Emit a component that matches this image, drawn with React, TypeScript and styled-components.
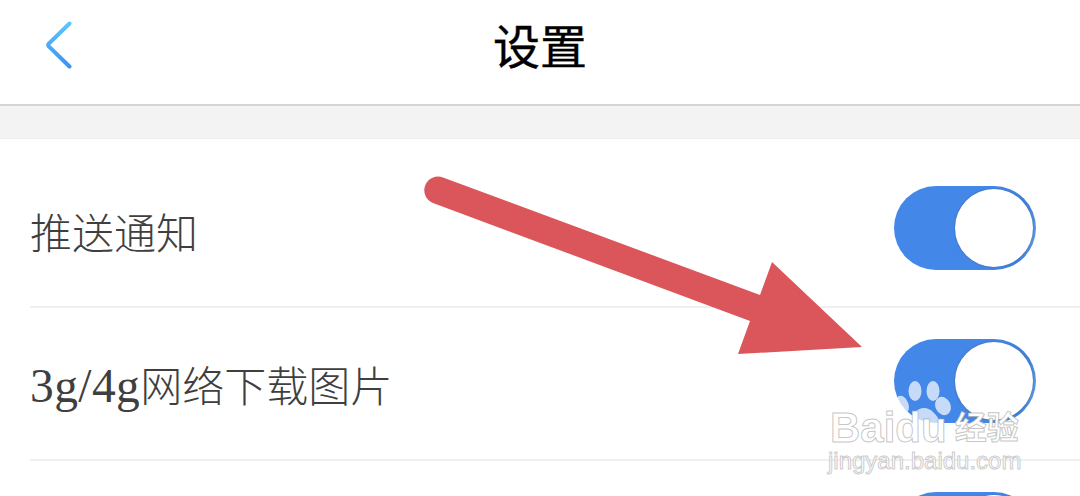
import React from "react";
import styled, { createGlobalStyle } from "styled-components";

const GlobalStyle = createGlobalStyle`
  html, body {
    margin: 0;
    padding: 0;
    background: #ffffff;
  }
`;

const App: React.FC = () => {
  return (
    <Page>
      <GlobalStyle />
      <Header>
        <BackButton>
          <svg width="26" height="48" viewBox="0 0 26 48" fill="none">
            <defs>
              <linearGradient id="back" x1="0" y1="0" x2="0" y2="1">
                <stop offset="0" stopColor="#5cc4ff" />
                <stop offset="1" stopColor="#3a94f4" />
              </linearGradient>
            </defs>
            <path
              d="M23.5 2.5 L2.8 22.6 Q1.6 24 2.8 25.4 L23.5 45.5"
              stroke="url(#back)"
              strokeWidth="4"
              strokeLinecap="round"
              strokeLinejoin="round"
            />
          </svg>
        </BackButton>
        <Title>设置</Title>
      </Header>
      <Band />
      <List>
        <Row>
          <Label>推送通知</Label>
          <Toggle>
            <Knob />
          </Toggle>
        </Row>
        <Row>
          <Label>
            <Latin>3g/4g</Latin>网络下载图片
          </Label>
          <Toggle>
            <Knob />
          </Toggle>
        </Row>
        <Row>
          <Label />
          <Toggle>
            <Knob />
          </Toggle>
        </Row>
      </List>

      <Arrow width="1080" height="496" viewBox="0 0 1080 496">
        <path
          d="M443 177.5 L760 295 L772 262 L862 347 L738 354 L750 321 L433 203 A13.5 13.5 0 0 1 443 177.5 Z"
          fill="#db565b"
        />
      </Arrow>

      <Watermark>
        <Paw width="60" height="48" viewBox="0 0 60 48">
          <g fill="#ffffff" fillOpacity="0.7">
            <ellipse cx="9" cy="25" rx="6.5" ry="9.5" transform="rotate(-20 9 25)" />
            <ellipse cx="22" cy="11" rx="6.5" ry="10" />
            <ellipse cx="40" cy="11" rx="6.5" ry="10" />
            <ellipse cx="50" cy="26" rx="7.5" ry="9.5" transform="rotate(-25 50 26)" />
            <path d="M31 28 C38 28 44 35 47 42 L47 48 L15 48 L15 42 C18 35 24 28 31 28 Z" />
          </g>
        </Paw>
        <BrandLine>
          <BrandName>Baidu</BrandName>
          <BrandCn>经验</BrandCn>
        </BrandLine>
        <BrandUrl>jingyan.baidu.com</BrandUrl>
      </Watermark>
    </Page>
  );
};

const Page = styled.div`
  position: relative;
  width: 1080px;
  height: 496px;
  overflow: hidden;
  background: #ffffff;
  font-family: "Liberation Serif", "Noto Sans CJK SC", serif;
`;

const Header = styled.header`
  display: flex;
  align-items: center;
  justify-content: center;
  position: relative;
  height: 104px;
  border-bottom: 2px solid #d4d4d4;
`;

const BackButton = styled.div`
  position: absolute;
  left: 46px;
  top: 21px;
  line-height: 0;
`;

const Title = styled.h1`
  margin: 0 0 18px;
  font-size: 47px;
  font-weight: 400;
  color: #000000;
  -webkit-text-stroke: 0.4px #000000;
`;

const Band = styled.div`
  height: 32px;
  background: #f3f3f3;
  border-bottom: 1px solid #eeeeee;
`;

const List = styled.div`
  padding-top: 16px;
  padding-left: 30px;
`;

const Row = styled.div`
  display: flex;
  align-items: center;
  justify-content: space-between;
  box-sizing: border-box;
  height: 153px;
  padding: 31px 44px 36px 0;
  border-bottom: 2px solid #efefef;
`;

const Label = styled.span`
  position: relative;
  top: 2px;
  font-size: 42px;
  font-weight: 300;
  color: #3f3f3f;
  white-space: nowrap;
`;

const Latin = styled.span`
  font-size: 47.5px;
  letter-spacing: 0.4px;
`;

const Toggle = styled.div`
  display: flex;
  align-items: center;
  justify-content: flex-end;
  flex: none;
  box-sizing: border-box;
  width: 142px;
  height: 84px;
  padding-right: 3px;
  border-radius: 42px;
  background: linear-gradient(100deg, #4387e8 70%, #3f80dc 88%, #6ba5ea 100%);
`;

const Knob = styled.div`
  width: 78px;
  height: 78px;
  border-radius: 50%;
  background: #ffffff;
  box-shadow: 0 0 2px rgba(70, 70, 70, 0.5);
`;

const Arrow = styled.svg`
  position: absolute;
  left: 0;
  top: 0;
  pointer-events: none;
`;

const Watermark = styled.div`
  position: absolute;
  left: 828px;
  top: 380px;
  width: 200px;
  height: 96px;
  color: #ffffff;
  font-family: "Liberation Sans", "Noto Sans CJK SC", sans-serif;
`;

const Paw = styled.svg`
  position: absolute;
  left: 65px;
  top: 0;
`;

const BrandLine = styled.div`
  position: absolute;
  left: 2px;
  top: 29px;
  display: flex;
  align-items: center;
  gap: 8px;
  white-space: nowrap;
`;

const BrandName = styled.span`
  font-size: 42px;
  line-height: 38px;
  font-weight: 700;
  color: #ffffff;
  -webkit-text-stroke: 1px rgba(160, 160, 160, 0.6);
`;

const BrandCn = styled.span`
  font-size: 32px;
  line-height: 38px;
  font-weight: 700;
  color: #ffffff;
  -webkit-text-stroke: 1px rgba(160, 160, 160, 0.6);
`;

const BrandUrl = styled.div`
  position: absolute;
  left: 0;
  top: 68px;
  font-size: 24px;
  line-height: 26px;
  letter-spacing: 0;
  white-space: nowrap;
  color: #ffffff;
  -webkit-text-stroke: 1px rgba(160, 160, 160, 0.55);
`;

export default App;
